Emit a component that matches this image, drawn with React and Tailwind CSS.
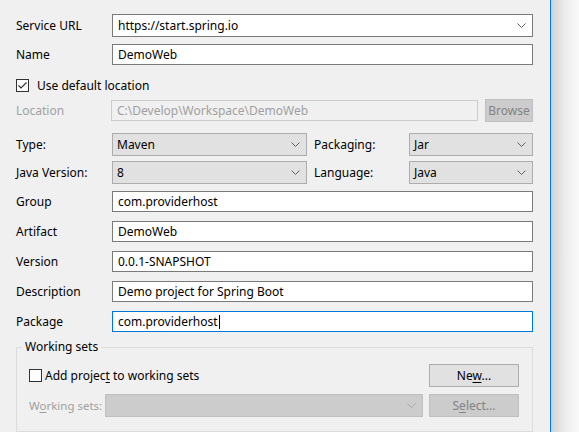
import React from "react";

const Chevron = ({ color = "#606060" }) => (
  <svg width="9" height="5" viewBox="0 0 9 5" className="shrink-0">
    <path d="M0.5 0.5 L4.5 4.5 L8.5 0.5" fill="none" stroke={color} strokeWidth="1" />
  </svg>
);

const Text = ({ value, focused }) => (
  <div
    className={`flex-1 h-[21px] bg-white border flex items-center pl-[5px] ${
      focused ? "border-[#0078d7]" : "border-[#7a7a7a]"
    }`}
  >
    <span>{value}</span>
    {focused && <span className="w-px h-[14px] bg-black ml-[1px]" />}
  </div>
);

const Combo = ({ value, className = "", editable }) => (
  <div
    className={`h-[23px] border flex items-center pl-[4px] pr-[6px] ${
      editable ? "bg-white border-[#7a7a7a] pl-[5px]" : "bg-[#e1e1e1] border-[#adadad]"
    } ${className}`}
  >
    <span className="flex-1">{value}</span>
    <Chevron />
  </div>
);

const Row = ({ label, children, className = "", disabled }) => (
  <div className={`flex items-center ${className}`}>
    <div className={`w-[96px] shrink-0 whitespace-nowrap ${disabled ? "text-[#a0a0a0]" : ""}`}>{label}</div>
    {children}
  </div>
);

const Check = ({ checked }) => (
  <div className="w-[13px] h-[13px] border border-[#333333] bg-white flex items-center justify-center shrink-0">
    {checked && (
      <svg width="11" height="11" viewBox="0 0 11 11">
        <path d="M1.5 5.5 L4 8 L9.5 2.5" fill="none" stroke="#333333" strokeWidth="1.2" />
      </svg>
    )}
  </div>
);

export default function App() {
  return (
    <div
      className="w-[579px] h-[432px] flex overflow-hidden text-[12px] text-black"
      style={{ fontFamily: '"Noto Sans", sans-serif' }}
    >
      <div className="w-[551px] h-full bg-[#f0f0f0] border-r border-[#0078d7] pl-[16px] pr-[17px] flex flex-col leading-none">
        <Row label="Service URL" className="mt-[14px] h-[23px]">
          <Combo value="https://start.spring.io" className="flex-1" editable />
        </Row>
        <Row label="Name" className="mt-[7px] h-[21px]">
          <Text value="DemoWeb" />
        </Row>
        <div className="mt-[14px] h-[13px] flex items-center gap-[8px]">
          <Check checked />
          <span>Use default location</span>
        </div>
        <Row label="Location" disabled className="mt-[7px] h-[23px]">
          <div className="flex-1 h-[21px] -ml-px border border-[#cccccc] bg-[#f0f0f0] text-[#a0a0a0] flex items-center pl-[5px]">
            C:\Develop\Workspace\DemoWeb
          </div>
          <div className="ml-[7px] w-[48px] h-[23px] bg-[#cccccc] border border-[#bfbfbf] text-[#838383] flex items-center justify-center">
            Browse
          </div>
        </Row>
        <Row label="Type:" className="mt-[11px] h-[23px]">
          <Combo value="Maven" className="w-[195px]" />
          <div className="w-[102px] pl-[7px] whitespace-nowrap">Packaging:</div>
          <Combo value="Jar" className="flex-1" />
        </Row>
        <Row label="Java Version:" className="mt-[5px] h-[23px]">
          <Combo value="8" className="w-[195px]" />
          <div className="w-[102px] pl-[7px] whitespace-nowrap">Language:</div>
          <Combo value="Java" className="flex-1" />
        </Row>
        <Row label="Group" className="mt-[7px] h-[21px]">
          <Text value="com.providerhost" />
        </Row>
        <Row label="Artifact" className="mt-[9px] h-[21px]">
          <Text value="DemoWeb" />
        </Row>
        <Row label="Version" className="mt-[9px] h-[21px]">
          <Text value="0.0.1-SNAPSHOT" />
        </Row>
        <Row label="Description" className="mt-[9px] h-[21px]">
          <Text value="Demo project for Spring Boot" />
        </Row>
        <Row label="Package" className="mt-[9px] h-[21px]">
          <Text value="com.providerhost" focused />
        </Row>
        <fieldset className="mt-[8px] border border-[#dcdcdc] pl-[12px] pr-[13px] pb-[12px] h-[92px] -mb-[20px]">
          <legend className="-ml-[7px] px-[3px] h-[14px] leading-[14px]">Working sets</legend>
          <div className="mt-[10px] h-[23px] flex items-center">
            <Check />
            <span className="ml-[3px] flex-1">
              Add projec<span className="underline underline-offset-2">t</span> to working sets
            </span>
            <div className="w-[90px] h-[23px] bg-[#e1e1e1] border border-[#adadad] flex items-center justify-center">
              <span>
                Ne<span className="underline underline-offset-2">w</span>...
              </span>
            </div>
          </div>
          <div className="mt-[7px] h-[23px] flex items-center">
            <div className="w-[76px] shrink-0 whitespace-nowrap text-[#a0a0a0] text-[11.5px]">
              W<span className="underline underline-offset-2">o</span>rking sets:
            </div>
            <div className="w-[318px] h-[23px] bg-[#cccccc] border border-[#bfbfbf] flex items-center justify-end pr-[6px]">
              <Chevron color="#a8a8a8" />
            </div>
            <div className="ml-[6px] w-[90px] h-[23px] bg-[#cccccc] border border-[#bfbfbf] text-[#838383] flex items-center justify-center">
              <span>
                S<span className="underline underline-offset-2">e</span>lect...
              </span>
            </div>
          </div>
        </fieldset>
      </div>
      <div className="flex-1 h-full bg-gradient-to-r from-[#d2d2d2] via-[#ececec] to-[#fafafa]" />
    </div>
  );
}
